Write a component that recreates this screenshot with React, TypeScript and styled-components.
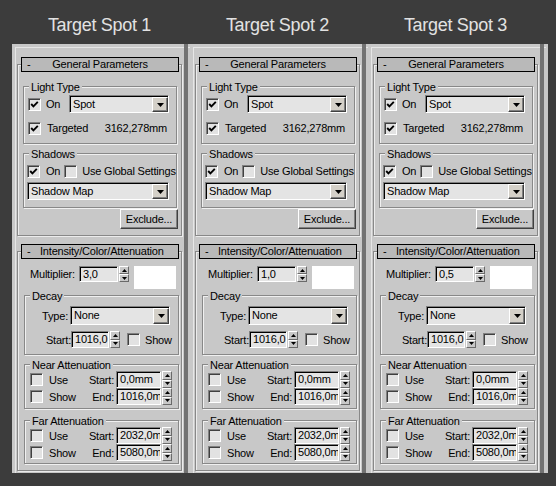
import React from "react";
import styled, { createGlobalStyle } from "styled-components";

const GlobalStyle = createGlobalStyle`
  body {
    margin: 0;
    background: #3c3c3c;
    font-family: "Liberation Sans", Arial, sans-serif;
  }
`;

const Page = styled.div`
  width: 556px;
  height: 486px;
  overflow: hidden;
`;

const TitleRow = styled.div`
  display: flex;
  padding-left: 12px;
`;

const Title = styled.div`
  width: 178px;
  height: 44px;
  box-sizing: border-box;
  padding: 6px 8px 0 5px;
  line-height: 38px;
  text-align: center;
  font-size: 18px;
  letter-spacing: -0.3px;
  color: #e2e2e2;
`;

const Frame = styled.div`
  display: flex;
  width: fit-content;
  margin-left: 12px;
  padding-right: 2px;
  background: #c8c8c8;
  font-size: 11px;
  letter-spacing: -0.2px;
  color: #000;
`;

const Panel = styled.div`
  display: flex;
  width: 178px;
  box-shadow: inset 3px 3px 0 #c8c8c8, inset 4px 4px 0 #e6e6e6;
`;

const Column = styled.div`
  display: flex;
  flex-direction: column;
  width: 165px;
  margin-left: 5px;
  padding: 13px 0 2px;
`;

const Strip = styled.div`
  width: 4px;
  margin-left: 2px;
  background: #727272;
`;

const RolloutHeader = styled.div<{ $mt: number }>`
  position: relative;
  z-index: 1;
  display: grid;
  grid-template-columns: 18px 1fr 18px;
  align-items: center;
  width: 158px;
  height: 15px;
  box-sizing: border-box;
  margin: ${(p) => p.$mt}px 0 0 4px;
  border: 1px solid #000;
  background: #b9b9b9;
  line-height: 13px;
`;

const Dash = styled.span`
  padding-left: 5px;
`;

const HeaderText = styled.span`
  text-align: center;
  white-space: nowrap;
`;

const RolloutBody = styled.div<{ $pt: number }>`
  display: flex;
  flex-direction: column;
  margin-top: -8px;
  padding: ${(p) => p.$pt}px 0 6px;
  border: 1px solid #888;
  box-shadow: inset 1px 1px 0 #ececec, 1px 1px 0 #ececec;
`;

const Group = styled.div<{ $mt: number; $ml: number; $mr: number; $pb: number }>`
  display: flex;
  flex-direction: column;
  margin: ${(p) => p.$mt}px ${(p) => p.$mr}px 0 ${(p) => p.$ml}px;
  padding-bottom: ${(p) => p.$pb}px;
  border: 1px solid #888;
  box-shadow: inset 1px 1px 0 #f0f0f0, 1px 1px 0 #f0f0f0;
`;

const Legend = styled.div`
  align-self: flex-start;
  height: 12px;
  margin: -6px 0 0 5px;
  padding: 0 2px;
  line-height: 12px;
  background: #c8c8c8;
  white-space: nowrap;
`;

const Row = styled.div<{ $h: number; $mt?: number; $pl?: number; $pr?: number; $top?: boolean }>`
  display: flex;
  align-items: ${(p) => (p.$top ? "flex-start" : "center")};
  height: ${(p) => p.$h}px;
  margin-top: ${(p) => p.$mt ?? 0}px;
  padding: 0 ${(p) => p.$pr ?? 0}px 0 ${(p) => p.$pl ?? 0}px;
`;

const Text = styled.span<{ $ml?: number; $mr?: number; $w?: number; $right?: boolean; $auto?: boolean }>`
  flex: none;
  margin-left: ${(p) => (p.$auto ? "auto" : `${p.$ml ?? 0}px`)};
  margin-right: ${(p) => p.$mr ?? 0}px;
  width: ${(p) => (p.$w ? `${p.$w}px` : "auto")};
  text-align: ${(p) => (p.$right ? "right" : "left")};
  white-space: nowrap;
  line-height: 16px;
`;

const CheckBox = styled.span<{ $ml: number }>`
  display: flex;
  flex: none;
  align-items: center;
  justify-content: center;
  width: 13px;
  height: 13px;
  box-sizing: border-box;
  margin-left: ${(p) => p.$ml}px;
  border: 1px solid;
  border-color: #808080 #fff #fff #808080;
  box-shadow: inset 1px 1px 0 #404040;
  background: #e2e2e2;
`;

const Sunken = styled.div<{ $w?: number; $h: number; $ml?: number; $mr?: number; $auto?: boolean }>`
  display: flex;
  flex: ${(p) => (p.$w ? "none" : "1")};
  width: ${(p) => (p.$w ? `${p.$w}px` : "auto")};
  height: ${(p) => p.$h}px;
  box-sizing: border-box;
  margin-left: ${(p) => (p.$auto ? "auto" : `${p.$ml ?? 0}px`)};
  margin-right: ${(p) => p.$mr ?? 0}px;
  border: 1px solid;
  border-color: #808080 #fff #fff #808080;
  box-shadow: inset 1px 1px 0 #000;
  background: #e4e4e4;
  overflow: hidden;
`;

const FieldText = styled.span<{ $h: number }>`
  flex: 1;
  padding-left: 3px;
  line-height: ${(p) => p.$h - 2}px;
  white-space: nowrap;
  overflow: hidden;
`;

const DropButton = styled.span`
  display: flex;
  align-items: center;
  justify-content: center;
  width: 16px;
  margin: 1px 0 0;
  box-sizing: border-box;
  border: 1px solid;
  border-color: #fff #404040 #404040 #fff;
  box-shadow: inset -1px -1px 0 #808080;
  background: #d4d0c8;
`;

const Spinner = styled.div<{ $h: number; $ml: number }>`
  display: flex;
  flex: none;
  flex-direction: column;
  width: 10px;
  height: ${(p) => p.$h}px;
  margin-left: ${(p) => p.$ml}px;
`;

const SpinButton = styled.span`
  display: flex;
  flex: 1;
  align-items: center;
  justify-content: center;
  box-sizing: border-box;
  border: 1px solid;
  border-color: #fff #6a6a6a #6a6a6a #fff;
  background: #c8c8c8;
`;

const Swatch = styled.div`
  flex: none;
  width: 42px;
  height: 23px;
  margin-left: 5px;
  background: #fff;
`;

const Button = styled.div`
  align-self: flex-end;
  width: 58px;
  height: 20px;
  box-sizing: border-box;
  margin: 1px 3px 0 0;
  border: 1px solid;
  border-color: #fff #404040 #404040 #fff;
  box-shadow: inset -1px -1px 0 #808080;
  background: #c8c8c8;
  line-height: 18px;
  text-align: center;
`;

const Tick = () => (
  <svg width="9" height="9" viewBox="0 0 9 9">
    <polyline points="1.2,4 3.4,6.3 7.8,1.8" fill="none" stroke="#000" strokeWidth="1.9" />
  </svg>
);

const Check = ({ ml, on }: { ml: number; on?: boolean }) => (
  <CheckBox $ml={ml}>{on && <Tick />}</CheckBox>
);

const Arrow = ({ up, w, h }: { up?: boolean; w: number; h: number }) => (
  <svg width={w} height={h} viewBox={`0 0 ${w} ${h}`}>
    <polygon points={up ? `0,${h} ${w},${h} ${w / 2},0` : `0,0 ${w},0 ${w / 2},${h}`} fill="#000" />
  </svg>
);

const Dropdown = ({ value, h, w, ml, mr, auto }: { value: string; h: number; w?: number; ml?: number; mr?: number; auto?: boolean }) => (
  <Sunken $w={w} $h={h} $ml={ml} $mr={mr} $auto={auto}>
    <FieldText $h={h}>{value}</FieldText>
    <DropButton>
      <Arrow w={7} h={4} />
    </DropButton>
  </Sunken>
);

const Spin = ({ value, w, h, ml = 0 }: { value: string; w: number; h: number; ml?: number }) => (
  <>
    <Sunken $w={w} $h={h} $ml={ml}>
      <FieldText $h={h}>{value}</FieldText>
    </Sunken>
    <Spinner $h={h} $ml={1}>
      <SpinButton>
        <Arrow up w={5} h={3} />
      </SpinButton>
      <SpinButton>
        <Arrow w={5} h={3} />
      </SpinButton>
    </Spinner>
  </>
);

const Attenuation = ({ title, mt, pb, start, end }: { title: string; mt: number; pb: number; start: string; end: string }) => (
  <Group $mt={mt} $ml={6} $mr={2} $pb={pb}>
    <Legend>{title}</Legend>
    <Row $h={17} $pr={6}>
      <Check ml={5} />
      <Text $ml={6}>Use</Text>
      <Text $auto>Start:</Text>
      <Spin value={start} w={45} h={17} ml={2} />
    </Row>
    <Row $h={17} $pr={6}>
      <Check ml={5} />
      <Text $ml={6}>Show</Text>
      <Text $auto>End:</Text>
      <Spin value={end} w={45} h={17} ml={2} />
    </Row>
  </Group>
);

const SpotPanel = ({ multiplier }: { multiplier: string }) => (
  <Panel>
    <Column>
      <RolloutHeader $mt={0}>
        <Dash>-</Dash>
        <HeaderText>General Parameters</HeaderText>
      </RolloutHeader>
      <RolloutBody $pt={21}>
        <Group $mt={0} $ml={5} $mr={4} $pb={6}>
          <Legend>Light Type</Legend>
          <Row $h={18} $mt={2}>
            <Check ml={4} on />
            <Text $ml={5}>On</Text>
            <Dropdown value="Spot" h={18} w={100} mr={7} auto />
          </Row>
          <Row $h={18} $mt={6}>
            <Check ml={4} on />
            <Text $ml={6}>Targeted</Text>
            <Text $auto $mr={9}>3162,278mm</Text>
          </Row>
        </Group>
        <Group $mt={9} $ml={5} $mr={4} $pb={7}>
          <Legend>Shadows</Legend>
          <Row $h={18} $mt={2}>
            <Check ml={3} on />
            <Text $ml={6}>On</Text>
            <Check ml={4} />
            <Text $ml={5}>Use Global Settings</Text>
          </Row>
          <Row $h={18} $mt={2} $pl={3} $pr={7}>
            <Dropdown value="Shadow Map" h={18} />
          </Row>
        </Group>
        <Button>Exclude...</Button>
      </RolloutBody>

      <RolloutHeader $mt={8}>
        <Dash>-</Dash>
        <HeaderText>Intensity/Color/Attenuation</HeaderText>
      </RolloutHeader>
      <RolloutBody $pt={14}>
        <Row $h={23} $pl={12} $top>
          <Text $w={49}>Multiplier:</Text>
          <Spin value={multiplier} w={39} h={16} />
          <Swatch />
        </Row>
        <Group $mt={6} $ml={6} $mr={2} $pb={6}>
          <Legend>Decay</Legend>
          <Row $h={19} $mt={4}>
            <Text $w={43} $right>Type:</Text>
            <Dropdown value="None" h={19} w={100} ml={2} />
          </Row>
          <Row $h={17} $mt={6}>
            <Text $w={46} $right>Start:</Text>
            <Spin value="1016,0" w={38} h={17} />
            <Check ml={7} />
            <Text $ml={5}>Show</Text>
          </Row>
        </Group>
        <Attenuation title="Near Attenuation" mt={9} pb={3} start="0,0mm" end="1016,0mm" />
        <Attenuation title="Far Attenuation" mt={11} pb={2} start="2032,0mm" end="5080,0mm" />
      </RolloutBody>
    </Column>
    <Strip />
  </Panel>
);

const spots = [
  { name: "Target Spot 1", multiplier: "3,0" },
  { name: "Target Spot 2", multiplier: "1,0" },
  { name: "Target Spot 3", multiplier: "0,5" },
];

export default function App() {
  return (
    <Page>
      <GlobalStyle />
      <TitleRow>
        {spots.map((s) => (
          <Title key={s.name}>{s.name}</Title>
        ))}
      </TitleRow>
      <Frame>
        {spots.map((s) => (
          <SpotPanel key={s.name} multiplier={s.multiplier} />
        ))}
      </Frame>
    </Page>
  );
}
